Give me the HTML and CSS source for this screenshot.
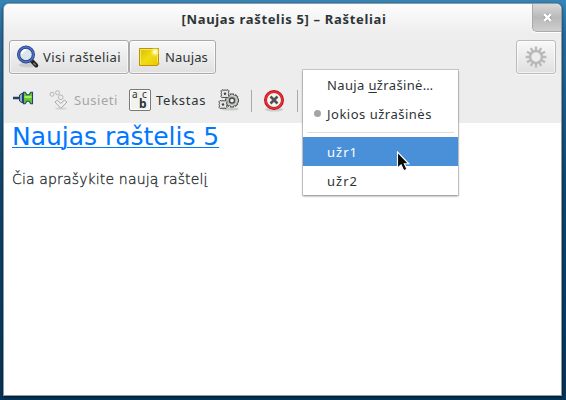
FILE: index.html
```html
<!DOCTYPE html>
<html lang="lt">
<head>
<meta charset="utf-8">
<title>Rašteliai</title>
<link rel="stylesheet" href="styles.css">
</head>
<body>
<main class="window">
  <header class="titlebar">
    <h1 class="title">[Naujas raštelis 5] – Rašteliai</h1>
    <button class="close" aria-label="Uždaryti"><svg width="9" height="9" viewBox="0 0 9 9"><path d="M1.5 1.5 7.5 7.5M7.5 1.5 1.5 7.5" stroke="#888" stroke-width="3.6"/><path d="M1.2 1.2 7.8 7.8M7.8 1.2 1.2 7.8" stroke="#fff" stroke-width="2.6"/></svg></button>
  </header>
  <nav class="main-bar">
    <button class="btn btn-all">
      <svg class="icon-search" width="24" height="24" viewBox="0 0 24 24"><ellipse cx="12" cy="20" rx="9" ry="2.5" fill="#bbb" opacity=".6"/><path d="m15 15 5.3 5.5" stroke="#29231f" stroke-width="4" stroke-linecap="round"/><path d="m17.5 18 2.3 2.3" stroke="#81766d" stroke-width="1.5"/><circle cx="10" cy="9.5" r="7.4" fill="#dce6ed" stroke="#253e82" stroke-width="3.2"/><circle cx="10" cy="9.5" r="7.4" fill="none" stroke="#4e70c4" stroke-width="1.6"/><path d="M6 9a4 4 0 0 1 4-4" fill="none" stroke="#fff" stroke-width="2"/></svg>
      <span class="label-all">Visi rašteliai</span>
    </button>
    <button class="btn btn-new">
      <svg width="22" height="20" viewBox="0 0 22 20"><defs><linearGradient id="note" x2="1" y2="1"><stop stop-color="#d9bd00"/><stop offset=".5" stop-color="#f2dc13"/><stop offset="1" stop-color="#e6c800"/></linearGradient><radialGradient id="glow"><stop offset=".15" stop-color="#fffff0"/><stop offset="1" stop-color="#fff04a" stop-opacity="0"/></radialGradient></defs><path d="M1.5 1.5h19v14l.5 1.5-2 1.5H1.5z" fill="url(#note)" stroke="#bd9206"/><path d="M2.5 17V2.5h17V15" fill="none" stroke="#f7e75a"/><circle cx="17" cy="5" r="5" fill="url(#glow)"/></svg>
      <span class="label-new">Naujas</span>
    </button>
    <button class="btn btn-gear" aria-label="Nuostatos"><svg width="22" height="22" viewBox="-11 -11 22 22"><g stroke="#bababa" stroke-width="2.4"><path d="M0-10.4V10.4M-10.4 0H10.4M-5.2-9 5.2 9M5.2-9-5.2 9M-9-5.2 9 5.2M-9 5.2 9-5.2"/></g><circle r="6" fill="#ededed" stroke="#bababa" stroke-width="2.6"/></svg></button>
  </nav>
  <nav class="note-bar">
    <svg class="pin" width="22" height="14" viewBox="0 0 22 14"><path d="M1 7h9" stroke="#273f5d" stroke-width="2.4"/><path d="M7.5 4 10.5 2v10L7.5 10z" fill="#91a9c4" stroke="#24436c"/><path d="M11.5 1.2h1.7l1.6 2.5h2.2l1.8-2.5h1.7v11.6h-1.7l-1.8-2.5h-2.2l-1.6 2.5h-1.7z" fill="#67c72a" stroke="#24436c" stroke-width="1.1"/><path d="M12.5 6h7" stroke="#a5ef68" stroke-width="2"/></svg>
    <svg class="link" width="20" height="20" viewBox="0 0 20 20"><ellipse cx="12" cy="18.5" rx="6" ry="1.3" fill="#d7d7d7"/><g fill="#eee" stroke="#b5b7b5"><circle cx="3" cy="4.3" r="2"/><circle cx="8.5" cy="2.7" r="2"/><circle cx="11.8" cy="7.3" r="2.3"/><path d="m6 12 2.3-1.8 3.4 3.2 3.7-3.2L18 12l-6.2 6.4z" stroke="#a7aaa7"/></g></svg>
    <span class="label-link">Susieti</span>
    <div class="abc"><span class="abc-a">a</span><span class="abc-c">c</span><span class="abc-b">b</span></div>
    <span class="label-text">Tekstas</span>
    <svg class="gears" width="22" height="22" viewBox="0 0 22 22"><ellipse cx="12" cy="20" rx="9" ry="1.6" fill="#ccc"/><g transform="translate(14 11.5)"><path d="M0-7V7M-7 0H7M-5-5 5 5M5-5-5 5" stroke="#4b4e4b" stroke-width="4"/><path d="M0-6V6M-6 0H6M-4.3-4.3 4.3 4.3M4.3-4.3-4.3 4.3" stroke="#c7c9c5" stroke-width="2.2"/><circle r="5" fill="#b5b8b3" stroke="#d8dad6"/><circle r="2.5" fill="#eee" stroke="#464946" stroke-width="1.4"/></g><g transform="translate(7 4.8)"><path d="m-4-3 1-1 2 .5L0-4l1 .5 2-.5 1 1-.5 2L4 0l-.5 1 .5 2-1 1-2-.5L0 4l-1-.5-2 .5-1-1 .5-2L-4 0l.5-1z" fill="#e5e6e2" stroke="#494c49"/><circle r="1.2" fill="#444"/></g><g transform="translate(5 15.5)"><path d="m-4-3 1-1 2 .5L0-4l1 .5 2-.5 1 1-.5 2L4 0l-.5 1 .5 2-1 1-2-.5L0 4l-1-.5-2 .5-1-1 .5-2L-4 0l.5-1z" fill="#e5e6e2" stroke="#494c49"/><circle r="1.2" fill="#444"/></g></svg>
    <i class="divider divider-a"></i>
    <svg class="delete" width="22" height="23" viewBox="0 0 22 23"><ellipse cx="11" cy="20.5" rx="9" ry="2" fill="#bbb" opacity=".65"/><circle cx="11" cy="11" r="8.5" fill="#f5f5f3" stroke="#b91018" stroke-width="3"/><circle cx="11" cy="11" r="8.3" fill="none" stroke="#ee3036" stroke-width="1.6"/><path d="m7.5 7.5 7 7m0-7-7 7" stroke="#50534f" stroke-width="2.6"/></svg>
    <i class="divider divider-b"></i>
  </nav>
  <article class="note">
    <h2 class="note-title"><span class="heading-text">Naujas raštelis 5</span></h2>
    <p class="note-body"><span class="body-text">Čia aprašykite naują raštelį</span></p>
  </article>
</main>
<div class="menu" role="menu">
  <div class="item"><span class="item-new">Nauja <u>u</u>žrašinė…</span></div>
  <div class="item item-radio"><i class="dot"></i><span class="item-none">Jokios užrašinės</span></div>
  <div class="rule"></div>
  <div class="item selected"><span class="item-short">užr1</span></div>
  <div class="item"><span class="item-short">užr2</span></div>
</div>
<svg class="cursor" width="16" height="22" viewBox="0 0 16 22"><path d="M1.5 1v16l3.6-3 2.7 5.7 3.2-1.5-2.6-5.4h4.4z" fill="#0b0b0b" stroke="#fff" stroke-width="1.1"/></svg>
</body>
</html>
```
FILE: styles.css
```css
* { box-sizing: border-box; }
body {
  margin: 0;
  width: 566px;
  height: 400px;
  padding: 4px 4px 5px;
  overflow: hidden;
  background: linear-gradient(#3785b7 0, #276c9d 35px, #11466d 180px, #063459 400px);
  font: 13px "Noto Sans", sans-serif;
  color: #2e3436;
}
svg { display: block; flex: none; fill: none; }
button { margin: 0; padding: 0; font: inherit; color: inherit; }
.window {
  width: 557px;
  height: 391px;
  display: flex;
  flex-direction: column;
  overflow: hidden;
  border-radius: 5px 5px 0 0;
  background: #fff;
  box-shadow: 0 0 0 1px #8d9ba3, 0 1px 3px 1px #0009;
}
.titlebar {
  height: 30px;
  flex: none;
  position: relative;
  display: flex;
  justify-content: center;
  background: linear-gradient(#fdfdfd, #ededed);
}
.title { margin: 5px 0 0 3px; font: bold 13px/20px "Noto Sans", sans-serif; letter-spacing: .67px; white-space: nowrap; }
.close {
  position: absolute;
  right: 0;
  top: 0;
  width: 29px;
  height: 28px;
  display: grid;
  place-items: center;
  border: 1px solid #aaa;
  border-width: 0 0 1px 1px;
  border-radius: 0 5px 0 5px;
  background: linear-gradient(#d8d8d8, #b9b9b9 50%, #cecece);
  box-shadow: 0 1px #fff;
}
.main-bar { height: 43px; flex: none; display: flex; padding: 6px 5px 0 5px; background: #ededed; }
.btn {
  height: 34px;
  display: flex;
  align-items: center;
  border: 1px solid #aaa;
  border-radius: 3px;
  background: linear-gradient(#f8f8f8, #e0e0e0);
  box-shadow: inset 0 0 0 1px #fff9, 0 1px #f8f8f8;
  white-space: nowrap;
}
.btn-all { width: 120px; padding-left: 6px; }
.btn-new { width: 87px; padding-left: 8px; }
.btn-gear { width: 40px; margin-left: auto; justify-content: center; border-color: #bbb; }
.label-all { margin-left: 3px; letter-spacing: .42px; }
.label-new { margin-left: 5px; letter-spacing: .15px; }
.note-bar { height: 46px; flex: none; display: flex; align-items: center; background: #ededed; white-space: nowrap; }
.pin { margin: -5px 0 0 8px; }
.link { margin-left: 15px; }
.label-link { width: 45px; margin-left: 5px; letter-spacing: .55px; color: #a4a7a7; }
.label-text { width: 51px; margin-left: 5px; letter-spacing: .75px; }
.gears { margin-left: 11px; }
.abc {
  display: grid;
  grid-template-columns: 10px 7px;
  grid-template-rows: 9px 10px;
  width: 22px;
  height: 22px;
  flex: none;
  margin-left: 10px;
  padding-left: 2px;
  border: 1px solid #777975;
  border-radius: 2px;
  background: #f2f2ee;
  box-shadow: inset 0 0 0 1px #fff;
  font-size: 10px;
  line-height: 9px;
}
.abc-b { grid-column: 1 / 3; margin-left: 7px; font-size: 12px; font-weight: bold; line-height: 10px; }
.divider { width: 1px; height: 22px; margin-top: 2px; background: #a9a9a9; }
.divider-a { margin-left: 11px; }
.delete { margin-left: 11px; }
.divider-b { margin-left: 12px; }
.note { flex: 1; padding: 0 8px; white-space: nowrap; }
.note-title { margin: 0; height: 32px; font: 25px/28px "DejaVu Sans", sans-serif; color: #0078ff; letter-spacing: -.03px; }
.heading-text { text-decoration: underline; text-decoration-thickness: 1px; text-underline-offset: 2px; }
.note-body { margin: 14px 0 0; font: 200 14px/20px "DejaVu Sans", "DejaVu Sans Light", sans-serif; letter-spacing: .15px; color: #15191b; -webkit-text-stroke: .3px #2e3436; }
.menu {
  position: absolute;
  left: 303px;
  top: 70px;
  width: 155px;
  height: 125px;
  background: #fff;
  box-shadow: 0 0 0 1px #aaa8, 0 1px 2px #0008;
}
.item { height: 29px; display: flex; align-items: center; padding-left: 24px; white-space: nowrap; }
.item u { text-underline-offset: 2px; }
.item-new { letter-spacing: .36px; }
.item-none { letter-spacing: .5px; }
.item-short { letter-spacing: 1px; }
.item-radio { padding-left: 11px; }
.dot { width: 7px; height: 7px; margin-right: 6px; border-radius: 50%; background: #a1a5a4; }
.rule { height: 1px; margin: 4px 4px 4px; background: #dedede; }
.selected { background: #4a90d9; color: #fff; }
.cursor { position: absolute; left: 396px; top: 151px; }
```
